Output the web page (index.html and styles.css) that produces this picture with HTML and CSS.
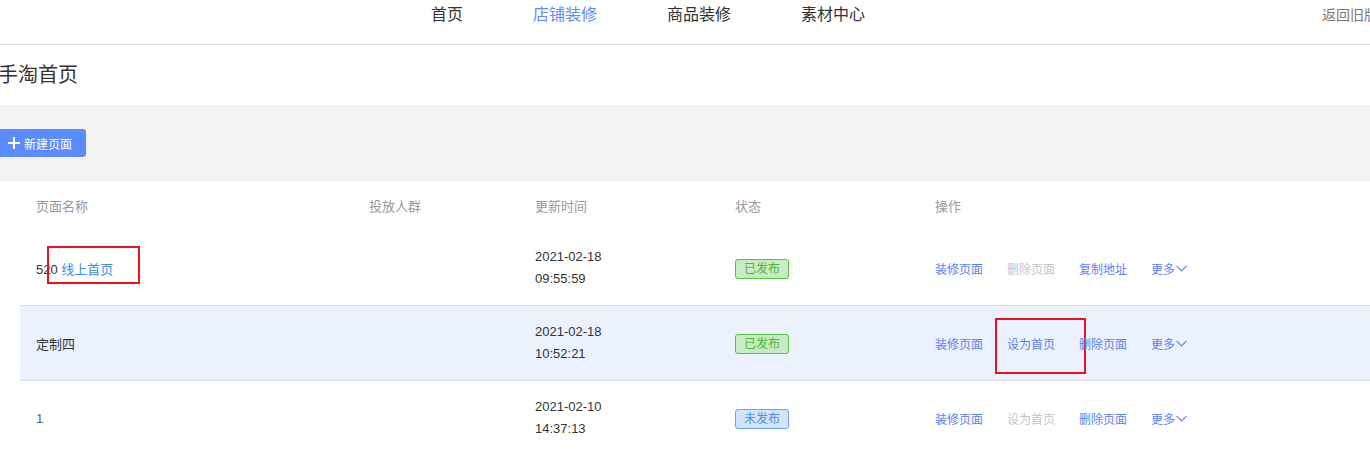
FILE: index.html
```html
<!DOCTYPE html>
<html lang="zh-CN">
<head>
<meta charset="utf-8">
<title>手淘首页</title>
<link rel="stylesheet" href="styles.css">
</head>
<body>
<div class="page">
  <header class="topnav">
    <nav class="nav-items">
      <a class="nav-item">首页</a>
      <a class="nav-item active">店铺装修</a>
      <a class="nav-item">商品装修</a>
      <a class="nav-item">素材中心</a>
    </nav>
    <a class="back-old">返回旧版</a>
  </header>
  <h1 class="title">手淘首页</h1>
  <div class="toolbar">
    <button class="btn-new"><span class="plus"></span>新建页面</button>
  </div>
  <div class="table">
    <div class="row head">
      <div class="cell">页面名称</div>
      <div class="cell">投放人群</div>
      <div class="cell">更新时间</div>
      <div class="cell">状态</div>
      <div class="cell">操作</div>
    </div>
    <div class="row">
      <div class="cell name">520 <a class="link">线上首页</a><span class="mark mark-1"></span></div>
      <div class="cell"></div>
      <div class="cell date">2021-02-18<br>09:55:59</div>
      <div class="cell"><span class="tag done">已发布</span></div>
      <div class="cell ops">
        <a class="op">装修页面</a><a class="op disabled">删除页面</a><a class="op">复制地址</a><a class="op more">更多<svg class="chev" width="11" height="7" viewBox="0 0 11 7"><path d="M0.5 0.8 L5.5 6 L10.5 0.8" fill="none" stroke="currentColor" stroke-width="1.1"/></svg></a>
      </div>
    </div>
    <div class="row hl">
      <div class="cell name">定制四</div>
      <div class="cell"></div>
      <div class="cell date">2021-02-18<br>10:52:21</div>
      <div class="cell"><span class="tag done">已发布</span></div>
      <div class="cell ops">
        <a class="op">装修页面</a><a class="op">设为首页<span class="mark mark-2"></span></a><a class="op">删除页面</a><a class="op more">更多<svg class="chev" width="11" height="7" viewBox="0 0 11 7"><path d="M0.5 0.8 L5.5 6 L10.5 0.8" fill="none" stroke="currentColor" stroke-width="1.1"/></svg></a>
      </div>
    </div>
    <div class="row">
      <div class="cell name num">1</div>
      <div class="cell"></div>
      <div class="cell date">2021-02-10<br>14:37:13</div>
      <div class="cell"><span class="tag todo">未发布</span></div>
      <div class="cell ops">
        <a class="op">装修页面</a><a class="op disabled">设为首页</a><a class="op">删除页面</a><a class="op more">更多<svg class="chev" width="11" height="7" viewBox="0 0 11 7"><path d="M0.5 0.8 L5.5 6 L10.5 0.8" fill="none" stroke="currentColor" stroke-width="1.1"/></svg></a>
      </div>
    </div>
  </div>
</div>
</body>
</html>
```
FILE: styles.css
```css
* { box-sizing: border-box; }
html, body { margin: 0; padding: 0; }
body {
  font-family: "Liberation Sans", "Noto Sans CJK SC", sans-serif;
  color: #333;
  background: #fff;
  overflow: hidden;
  width: 1370px;
}
.page { width: 1370px; overflow: hidden; }
a { text-decoration: none; cursor: pointer; }

.topnav {
  height: 45px;
  border-bottom: 1px solid #dcdcdc;
  display: flex;
  align-items: flex-start;
  position: relative;
}
.nav-items {
  display: flex;
  gap: 70px;
  padding-left: 431px;
  line-height: 30px;
  font-size: 16px;
}
.nav-item { color: #333; }
.nav-item.active { color: #5b8cff; }
.back-old {
  margin-left: auto;
  margin-right: -8px;
  font-size: 14px;
  line-height: 30px;
  color: #777;
  white-space: nowrap;
}

.title {
  margin: 0 0 0 -2px;
  height: 60px;
  line-height: 60px;
  font-size: 20px;
  font-weight: normal;
  color: #333;
}

.toolbar {
  height: 76px;
  background: #f3f3f3;
  display: flex;
  align-items: center;
}
.btn-new {
  height: 28px;
  width: 86px;
  border: none;
  border-radius: 0 3px 3px 0;
  background: #5b8cff;
  color: #fff;
  font-family: inherit;
  font-size: 12px;
  padding: 0 0 0 8px;
  display: flex;
  align-items: center;
  gap: 4px;
}
.plus {
  position: relative;
  width: 12px;
  height: 12px;
  display: inline-block;
}
.plus::before, .plus::after {
  content: "";
  position: absolute;
  background: #fff;
}
.plus::before { left: 0; right: 0; top: 5px; height: 2px; }
.plus::after { top: 0; bottom: 0; left: 5px; width: 2px; }

.table { margin-left: 20px; }
.row {
  display: grid;
  grid-template-columns: 333px 166px 200px 200px 1fr;
  padding-left: 16px;
  align-items: center;
  height: 75px;
  border-bottom: 1px solid #dedede;
  font-size: 13px;
  color: #333;
}
.row.head {
  height: 50px;
  border-bottom: none;
  color: #999;
  padding-bottom: 1px;
}
.row.hl { background: #ebf2fd; }
.cell { position: relative; }
.name .link { color: #3a8ee6; }
.num { color: #3b5fa8; }
.date { line-height: 22px; color: #333; }

.tag {
  display: inline-block;
  width: 54px;
  height: 20px;
  line-height: 18px;
  text-align: center;
  border-radius: 3px;
  font-size: 12px;
  margin-top: 1px;
}
.tag.done { background: #c7ebc3; border: 1px solid #56c33f; color: #4fb83a; }
.tag.todo { background: #d2e4fd; border: 1px solid #6aa3f4; color: #4c8fe6; }

.ops { display: flex; font-size: 12px; }
.op {
  width: 72px;
  color: #5a7ff5;
  white-space: nowrap;
  position: relative;
}
.op.disabled { color: #c4c4c4; }
.op.more { display: inline-flex; align-items: center; }
.chev { margin-left: 1px; margin-top: 1px; }

.mark {
  position: absolute;
  border: 2px solid #e8141a;
  pointer-events: none;
}
.mark-1 { left: 11px; top: -13px; width: 93px; height: 38px; }
.mark-2 { left: -12px; top: -17px; width: 91px; height: 56px; }
```
